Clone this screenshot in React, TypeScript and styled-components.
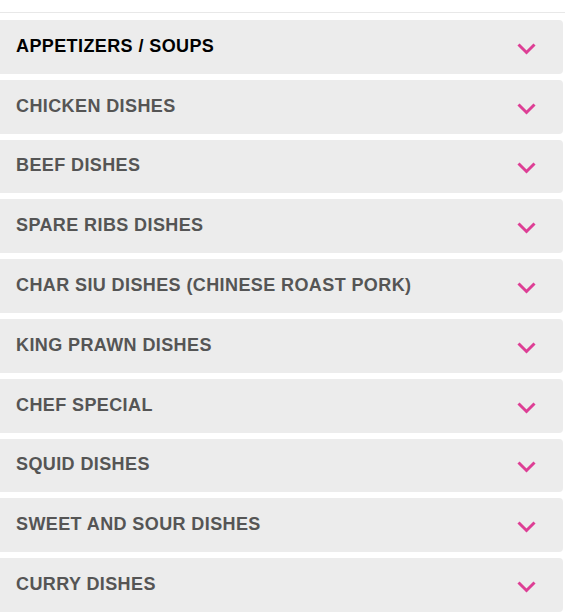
import React from "react";
import styled, { createGlobalStyle } from "styled-components";

const Global = createGlobalStyle`
  html, body { margin: 0; padding: 0; background: #fff; }
  body { font-family: "Liberation Sans", Arial, sans-serif; }
`;

const Wrapper = styled.div`
  width: 565px;
  padding-top: 12px;
`;

const TopRule = styled.div`
  height: 1px;
  background: #e8e8e8;
  margin-bottom: 7px;
`;

const List = styled.div`
  display: flex;
  flex-direction: column;
  gap: 6px;
  width: 563px;
`;

const Panel = styled.div`
  height: 53.8px;
  background: #ececec;
  border-radius: 0 4px 4px 0;
  display: flex;
  align-items: center;
  justify-content: space-between;
  padding: 0 27px 0 16px;
  box-sizing: border-box;
`;

const Title = styled.span<{ $active?: boolean }>`
  font-family: "Liberation Sans", Arial, sans-serif;
  font-weight: 700;
  font-size: 18px;
  letter-spacing: 0.4px;
  text-transform: uppercase;
  color: ${(p) => (p.$active ? "#000" : "#555")};
  margin-top: -1px;
`;

const Chevron = styled.svg`
  width: 19px;
  height: 12px;
  margin-top: 4px;
  flex: none;
`;

const items = [
  "APPETIZERS / SOUPS",
  "CHICKEN DISHES",
  "BEEF DISHES",
  "SPARE RIBS DISHES",
  "CHAR SIU DISHES (CHINESE ROAST PORK)",
  "KING PRAWN DISHES",
  "CHEF SPECIAL",
  "SQUID DISHES",
  "SWEET AND SOUR DISHES",
  "CURRY DISHES",
];

export default function App() {
  return (
    <>
      <Global />
      <Wrapper>
        <TopRule />
        <List>
          {items.map((t, i) => (
            <Panel key={t}>
              <Title $active={i === 0}>{t}</Title>
              <Chevron viewBox="0 0 19 12">
                <polyline
                  points="1.5,1.5 9.5,9.5 17.5,1.5"
                  fill="none"
                  stroke="#dd3f95"
                  strokeWidth="3"
                />
              </Chevron>
            </Panel>
          ))}
        </List>
      </Wrapper>
    </>
  );
}
